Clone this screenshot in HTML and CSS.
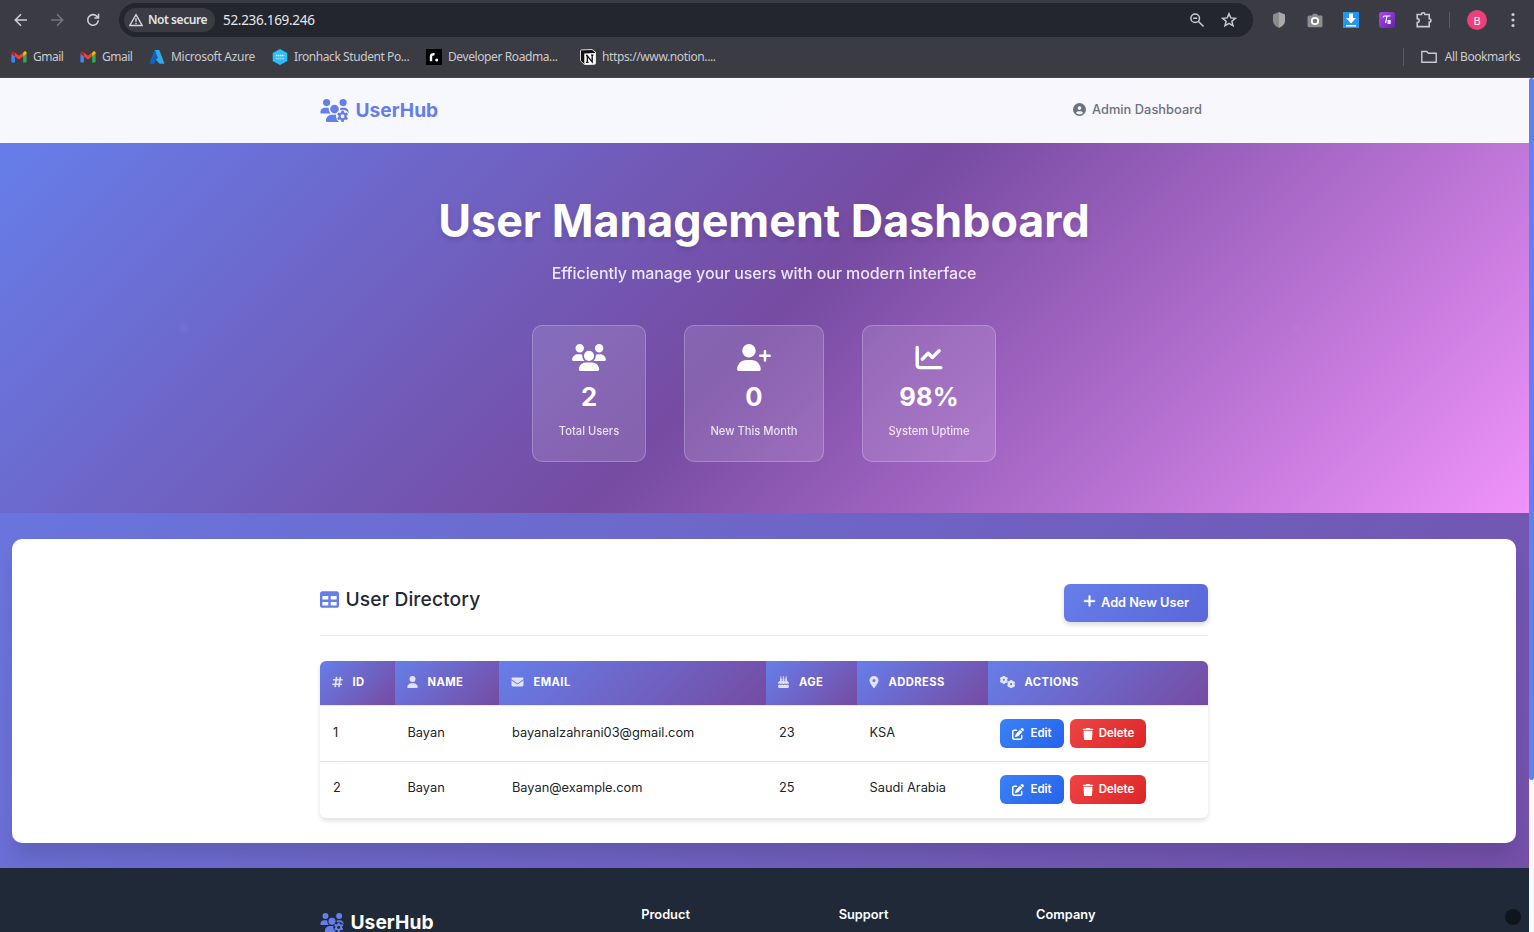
FILE: index.html
```html
<!DOCTYPE html>
<html lang="en">
<head>
<meta charset="utf-8">
<title>UserHub</title>
<link rel="stylesheet" href="styles.css">
</head>
<body>
<svg class="defs" width="0" height="0">
  <defs>
    <symbol id="i-users" viewBox="0 0 640 512"><path d="M144 0a80 80 0 1 1 0 160A80 80 0 1 1 144 0zM512 0a80 80 0 1 1 0 160A80 80 0 1 1 512 0zM0 298.7C0 239.8 47.8 192 106.7 192h42.7c15.9 0 31 3.5 44.6 9.7c-1.3 7.2-1.9 14.7-1.9 22.3c0 38.2 16.8 72.5 43.3 96H21.3C9.6 320 0 310.4 0 298.7zM405.3 320c26.6-23.5 43.3-57.8 43.3-96c0-7.6-.7-15-1.9-22.3c13.6-6.3 28.7-9.7 44.6-9.7h42.7C592.2 192 640 239.8 640 298.7c0 11.8-9.6 21.3-21.3 21.3H405.3zM224 224a96 96 0 1 1 192 0 96 96 0 1 1 -192 0zM128 485.3C128 411.7 187.7 352 261.3 352H378.7C452.3 352 512 411.7 512 485.3c0 14.7-11.9 26.7-26.7 26.7H154.7c-14.7 0-26.7-11.9-26.7-26.7z"/></symbol>
    <mask id="gear-cut" maskUnits="userSpaceOnUse" x="0" y="0" width="640" height="512"><rect width="640" height="512" fill="#fff"/><circle cx="500" cy="384" r="146" fill="#000"/></mask>
    <symbol id="i-gear" viewBox="-100 -100 200 200"><g><rect x="-28" y="-100" width="56" height="48" rx="10"/><rect x="-28" y="52" width="56" height="48" rx="10"/><rect x="-28" y="-100" width="56" height="48" rx="10" transform="rotate(60)"/><rect x="-28" y="52" width="56" height="48" rx="10" transform="rotate(60)"/><rect x="-28" y="-100" width="56" height="48" rx="10" transform="rotate(120)"/><rect x="-28" y="52" width="56" height="48" rx="10" transform="rotate(120)"/></g><circle r="54" fill="none" stroke="currentColor" stroke-width="58"/></symbol>
    <symbol id="i-users-gear" viewBox="0 0 640 512"><g mask="url(#gear-cut)"><use href="#i-users" width="640" height="512"/></g><path fill-rule="evenodd" transform="translate(4 8)" d="M472 246h48l9 42 24 14 39-12 25 43-30 29v28l30 29-25 43-39-12-24 14-9 42h-48l-9-42-24-14-39 12-25-43 30-29v-28l-30-29 25-43 39 12 24-14zM496 334a42 42 0 1 0 0 84 42 42 0 1 0 0-84z"/></symbol>
    <symbol id="i-user" viewBox="0 0 448 512"><path d="M224 256A128 128 0 1 0 224 0a128 128 0 1 0 0 256zm-45.7 48C79.8 304 0 383.8 0 482.3C0 498.7 13.3 512 29.7 512H418.3c16.4 0 29.7-13.3 29.7-29.7C448 383.8 368.2 304 269.7 304H178.3z"/></symbol>
    <symbol id="i-user-plus" viewBox="0 0 640 512"><path d="M96 128a128 128 0 1 1 256 0A128 128 0 1 1 96 128zM0 482.3C0 383.8 79.8 304 178.3 304h91.4C368.2 304 448 383.8 448 482.3c0 16.4-13.3 29.7-29.7 29.7H29.7C13.3 512 0 498.7 0 482.3zM504 312V248H440c-13.3 0-24-10.7-24-24s10.7-24 24-24h64V136c0-13.3 10.7-24 24-24s24 10.7 24 24v64h64c13.3 0 24 10.7 24 24s-10.7 24-24 24H552v64c0 13.3-10.7 24-24 24s-24-10.7-24-24z"/></symbol>
    <symbol id="i-chart" viewBox="0 0 512 512"><path d="M64 64c0-17.7-14.3-32-32-32S0 46.3 0 64V400c0 44.2 35.8 80 80 80H480c17.7 0 32-14.3 32-32s-14.3-32-32-32H80c-8.800 0-16-7.200-16-16V64zm406.6 86.6c12.5-12.5 12.5-32.8 0-45.3s-32.8-12.5-45.3 0L320 210.7l-57.4-57.4c-12.5-12.5-32.8-12.5-45.3 0l-112 112c-12.5 12.5-12.5 32.8 0 45.3s32.8 12.5 45.3 0L240 221.3l57.4 57.4c12.5 12.5 32.8 12.5 45.3 0l128-128z"/></symbol>
    <symbol id="i-circle-user" viewBox="0 0 512 512"><path fill-rule="evenodd" d="M399 384.2C376.9 345.8 335.4 320 288 320H224c-47.4 0-88.9 25.8-111 64.2c35.2 39.2 86.2 63.8 143 63.8s107.8-24.7 143-63.8zM0 256a256 256 0 1 1 512 0A256 256 0 1 1 0 256zm256 16a72 72 0 1 0 0-144 72 72 0 1 0 0 144z"/></symbol>
    <symbol id="i-table" viewBox="0 0 512 512"><path fill-rule="evenodd" d="M64 256V160H224v96H64zm0 64H224v96H64V320zm224 96V320H448v96H288zM448 256H288V160H448v96zM64 32C28.7 32 0 60.7 0 96V416c0 35.3 28.7 64 64 64H448c35.3 0 64-28.7 64-64V96c0-35.3-28.7-64-64-64H64z"/></symbol>
    <symbol id="i-plus" viewBox="0 0 448 512"><path stroke="currentColor" stroke-width="12" d="M256 80c0-17.7-14.3-32-32-32s-32 14.3-32 32V224H48c-17.7 0-32 14.3-32 32s14.3 32 32 32H192V432c0 17.7 14.3 32 32 32s32-14.3 32-32V288H400c17.7 0 32-14.3 32-32s-14.3-32-32-32H256V80z"/></symbol>
    <symbol id="i-hash" viewBox="0 0 448 512"><path fill="none" stroke="currentColor" stroke-width="74" stroke-linecap="round" d="M181 64 128 448M341 64 288 448M64 160H416M32 352H384"/></symbol>
    <symbol id="i-mail" viewBox="0 0 512 512"><path d="M48 64C21.5 64 0 85.5 0 112c0 15.1 7.1 29.3 19.2 38.4L236.8 313.6c11.4 8.5 27 8.5 38.4 0L492.8 150.4c12.1-9.1 19.2-23.3 19.2-38.4c0-26.5-21.5-48-48-48H48zM0 176V384c0 35.3 28.7 64 64 64H448c35.3 0 64-28.7 64-64V176L294.4 339.2c-22.8 17.1-54 17.1-76.8 0L0 176z"/></symbol>
    <symbol id="i-cake" viewBox="0 0 448 512"><path d="M112 0c-18 24-28 36-28 52a28 28 0 0 0 56 0c0-16-10-28-28-52zM224 0c-18 24-28 36-28 52a28 28 0 0 0 56 0c0-16-10-28-28-52zM336 0c-18 24-28 36-28 52a28 28 0 0 0 56 0c0-16-10-28-28-52zM76 100h72v124h40V100h72v124h40V100h72v124h12c35 0 64 29 64 64v50c-26 0-36-18-56-18-30 0-30 30-56 30s-30-30-56-30-30 30-56 30-30-30-56-30-30 30-56 30-26-30-56-30c-20 0-30 18-56 18v-50c0-35 29-64 64-64h12zM0 380c34 0 40-20 56-20 20 0 26 30 56 30s30-30 56-30 26 30 56 30 30-30 56-30 26 30 56 30 36-30 56-30c16 0 22 20 56 20v96c0 20-16 36-32 36H32c-18 0-32-16-32-36z"/></symbol>
    <symbol id="i-pin" viewBox="0 0 384 512"><path fill-rule="evenodd" d="M215.7 499.2C267 435 384 279.4 384 192C384 86 298 0 192 0S0 86 0 192c0 87.4 117 243 168.3 307.2c12.3 15.3 35.1 15.3 47.4 0zM192 128a64 64 0 1 1 0 128 64 64 0 1 1 0-128z"/></symbol>
    <symbol id="i-gears" viewBox="0 0 640 512"><use href="#i-gear" x="-10" y="-10" width="350" height="350"/><use href="#i-gear" x="300" y="172" width="350" height="350"/></symbol>
    <symbol id="i-edit" viewBox="0 0 512 512"><path d="M471.6 21.7c-21.9-21.9-57.3-21.9-79.2 0L362.3 51.7l97.9 97.9 30.1-30.1c21.9-21.9 21.9-57.3 0-79.2L471.6 21.7zm-299.2 220c-6.1 6.1-10.8 13.6-13.5 21.9l-29.6 88.8c-2.9 8.6-.6 18.1 5.8 24.6s15.9 8.7 24.6 5.8l88.8-29.6c8.2-2.7 15.7-7.4 21.9-13.5L437.7 172.3 339.7 74.3 172.4 241.7zM96 64C43 64 0 107 0 160V416c0 53 43 96 96 96H352c53 0 96-43 96-96V320c0-17.7-14.3-32-32-32s-32 14.3-32 32v96c0 17.7-14.3 32-32 32H96c-17.7 0-32-14.3-32-32V160c0-17.7 14.3-32 32-32h96c17.7 0 32-14.3 32-32s-14.3-32-32-32H96z"/></symbol>
    <symbol id="i-trash" viewBox="0 0 448 512"><path d="M135.2 17.7L128 32H32C14.3 32 0 46.3 0 64S14.3 96 32 96H416c17.7 0 32-14.3 32-32s-14.3-32-32-32H320l-7.2-14.3C307.4 6.8 296.3 0 284.2 0H163.8c-12.1 0-23.2 6.8-28.6 17.7zM416 128H32L53.2 467c1.6 25.3 22.6 45 47.9 45H346.9c25.3 0 46.3-19.7 47.9-45L416 128z"/></symbol>
    <symbol id="i-gmail" viewBox="0 0 16 16"><path fill="#4285f4" d="M1 13.4h2.9V7.2L.4 4.8V12.600q0 .8.6.8z"/><path fill="#34a853" d="M12.100 13.400H15q.6 0 .6-.8V4.800l-3.500 2.400z"/><path fill="#fbbc04" d="M12.100 3.700v3.700l3.500-2.600V3.900c0-1.500-1.500-2-2.500-1.200z"/><path fill="#ea4335" d="M3.900 7.400V3.600L8 6.700l4.100-3.100v3.800L8 10.500z"/><path fill="#c5221f" d="M.4 3.900v.9l3.500 2.600V3.600l-1-.8C1.900 2.100.4 2.500.4 3.900z"/></symbol>
  </defs>
</svg>

<header class="chrome">
  <div class="toolbar">
    <svg class="nav-ico back" viewBox="0 0 16 16"><path d="M14 8H2.500M8 2.300 2.300 8 8 13.700"/></svg>
    <svg class="nav-ico fwd" viewBox="0 0 16 16"><path d="M2 8h11.500M8 2.300 13.700 8 8 13.700"/></svg>
    <svg class="nav-ico reload" viewBox="0 0 16 16"><path d="M13.300 8.300A5.300 5.300 0 1 1 11.800 4.200L13.500 6M13.500 1.800V6H9.300"/></svg>
    <div class="omnibox">
      <div class="chip">
        <svg class="warn" viewBox="0 0 14 14"><path d="M7 1.700 13.200 12.500H.8z"/><path d="M7 5.200v3.600M7 9.700v1.500"/></svg>
        <span>Not secure</span>
      </div>
      <span class="url">52.236.169.246</span>
      <svg class="omni-ico" viewBox="0 0 16 16"><circle cx="6.200" cy="6.200" r="4.300"/><path d="m9.500 9.500 5 5M4.200 6.200h4"/></svg>
      <svg class="omni-ico star" viewBox="0 0 16 16"><path d="m8 1.700 1.800 4.200 4.600.4-3.500 3 1.100 4.500L8 11.400l-4 2.400 1.100-4.500-3.500-3 4.600-.4z"/></svg>
    </div>
    <div class="extensions">
      <svg class="ext" viewBox="0 0 16 16"><path fill="#aaa9a7" d="M8 0 14 2.500V9q0 4-6 7z"/><path fill="#8b8b8a" d="M8 0 2 2.500V9q0 4 6 7z"/></svg>
      <svg class="ext" viewBox="0 0 16 16"><path fill="#8e8e8d" d="M.5 5q0-1.500 1.500-1.500h3L6 1.700h4l1 1.800h3q1.500 0 1.500 1.500v9q0 1.300-1.500 1.300H2Q.5 15.300.5 14z"/><circle cx="8" cy="9" r="3.200" fill="#777" stroke="#fff" stroke-width="1.800"/></svg>
      <svg class="ext" viewBox="0 0 16 16"><path fill="#2196f3" d="M0 0h16v16H0z"/><path fill="#fff" d="M6 1.500h4V6h3l-5 5.500L3 6h3zM3 13h10v1.500H3z"/></svg>
      <svg class="ext" viewBox="0 0 16 16"><defs><linearGradient id="pg" x2="1" y2="1"><stop stop-color="#a94bea"/><stop offset="1" stop-color="#6720b0"/></linearGradient></defs><rect width="16" height="16" rx="2.500" fill="url(#pg)"/><path fill="none" stroke="#fff" stroke-width="1.200" d="M4 5.500q.3-1.500 1.800-1.500H11.500M8 4 6.600 11"/><path fill="#fff" opacity=".85" d="M8.500 8h3.300v4H8.500z"/></svg>
      <svg class="ext puzzle" viewBox="0 0 16 16"><path d="M1.200 2.500h4.300a1.700 1.700 0 0 1 3.400 0h4.300v4.200a1.700 1.700 0 0 1 0 3.400v4.500H1.200v-4a2 2 0 0 0 0-4z"/></svg>
      <span class="bar"></span>
      <span class="avatar">B</span>
      <svg class="dots" viewBox="0 0 4 16"><circle cx="2" cy="2.500" r="1.600"/><circle cx="2" cy="8" r="1.600"/><circle cx="2" cy="13.500" r="1.600"/></svg>
    </div>
  </div>
  <nav class="bookmarks">
    <a class="bm bm-gmail"><svg viewBox="0 0 16 16"><use href="#i-gmail"/></svg><span>Gmail</span></a>
    <a class="bm bm-gmail2"><svg viewBox="0 0 16 16"><use href="#i-gmail"/></svg><span>Gmail</span></a>
    <a class="bm bm-azure"><svg viewBox="0 0 16 16"><path fill="#0f65b8" d="M5.500 1h4.600L5.500 14.800H1.200q-.8 0-.6-1z"/><path fill="#0a4fa0" d="M5 9.500h6.500l1 4-7.700-2.700z"/><path fill="#2fa8ec" d="M6 1h4.300l5 13q.2.800-.7.800h-4L6.500 10.500 8.800 9z"/></svg><span>Microsoft Azure</span></a>
    <a class="bm bm-iron"><svg viewBox="0 0 16 16"><path fill="#2dbdf7" d="m8 0 7.300 4v8L8 16 .7 12V4z"/><path stroke="#d9f4ff" stroke-width="1.500" stroke-dasharray="1.500 .5" d="M3.800 6.500h8.400"/><path stroke="#9ce2fd" stroke-width="1.300" stroke-dasharray="1.200 .6" d="M4 9.500h8"/></svg><span>Ironhack Student Po...</span></a>
    <a class="bm bm-road"><svg viewBox="0 0 16 16"><path fill="#000" d="M0 0h16v16H0z"/><path fill="none" stroke="#fff" stroke-width="2.400" d="M5 12.300V7q0-2 3.500-1.700"/><circle cx="10.700" cy="11" r="1.500" fill="#fff"/></svg><span>Developer Roadma...</span></a>
    <a class="bm bm-notion"><svg viewBox="0 0 16 16"><path fill="#111" stroke="#eee" stroke-width=".9" stroke-linejoin="round" d="M1.500.9 12 .5l3.500 2.600v11.400q0 .8-1 .9L4.500 15.600.5 11.700V2q0-1 1-1.100z"/><path fill="#fff" d="M4.300 4.500 15.300 4v11L4.300 15.500z"/><path fill="none" stroke="#111" stroke-width="1.300" d="M7.300 13.300V6.800l4.900 6.100V6M6 6.700h1.800M11 6.200h2.500M6 13.300h2.500"/></svg><span>https://www.notion....</span></a>
    <div class="all"><svg viewBox="0 0 16 14"><path d="M.8 1.500h5l1.600 1.800h7.800v9H.8z"/></svg><span>All Bookmarks</span></div>
  </nav>
</header>

<div class="viewport">
  <div class="page">
    <nav class="topnav">
      <div class="container topnav-row">
        <div class="brand"><svg><use href="#i-users-gear"/></svg><span>UserHub</span></div>
        <div class="admin"><svg><use href="#i-circle-user"/></svg><span>Admin Dashboard</span></div>
      </div>
    </nav>

    <section class="hero">
      <h1>User Management Dashboard</h1>
      <p class="lead">Efficiently manage your users with our modern interface</p>
      <div class="stats">
        <div class="stat stat-total"><svg class="wide"><use href="#i-users"/></svg><strong>2</strong><span>Total Users</span></div>
        <div class="stat stat-new"><svg class="wide"><use href="#i-user-plus"/></svg><strong>0</strong><span>New This Month</span></div>
        <div class="stat stat-up"><svg><use href="#i-chart"/></svg><strong>98%</strong><span>System Uptime</span></div>
      </div>
    </section>

    <main class="main">
      <div class="panel">
        <div class="container">
          <div class="panel-head">
            <h2><svg><use href="#i-table"/></svg><span>User Directory</span></h2>
            <button class="btn-add"><svg><use href="#i-plus"/></svg><span>Add New User</span></button>
          </div>
          <table class="users">
            <colgroup><col class="c-id"><col class="c-name"><col class="c-email"><col class="c-age"><col class="c-address"><col class="c-actions"></colgroup>
            <thead>
              <tr>
                <th><div><svg class="w10"><use href="#i-hash"/></svg>ID</div></th>
                <th><div><svg class="w10"><use href="#i-user"/></svg>NAME</div></th>
                <th><div><svg class="w12"><use href="#i-mail"/></svg>EMAIL</div></th>
                <th><div><svg class="w10"><use href="#i-cake"/></svg>AGE</div></th>
                <th><div><svg class="w9"><use href="#i-pin"/></svg>ADDRESS</div></th>
                <th><div><svg class="w14"><use href="#i-gears"/></svg>ACTIONS</div></th>
              </tr>
            </thead>
            <tbody>
              <tr>
                <td>1</td><td>Bayan</td><td>bayanalzahrani03@gmail.com</td><td>23</td><td>KSA</td>
                <td><div class="actions"><button class="btn edit"><svg><use href="#i-edit"/></svg>Edit</button><button class="btn del"><svg><use href="#i-trash"/></svg>Delete</button></div></td>
              </tr>
              <tr>
                <td>2</td><td>Bayan</td><td>Bayan@example.com</td><td>25</td><td>Saudi Arabia</td>
                <td><div class="actions"><button class="btn edit"><svg><use href="#i-edit"/></svg>Edit</button><button class="btn del"><svg><use href="#i-trash"/></svg>Delete</button></div></td>
              </tr>
            </tbody>
          </table>
        </div>
      </div>
    </main>

    <footer class="footer">
      <div class="container footer-grid">
        <div class="footer-brand"><svg><use href="#i-users-gear"/></svg><span>UserHub</span></div>
        <h4>Product</h4>
        <h4>Support</h4>
        <h4>Company</h4>
      </div>
      <span class="bubble"></span>
    </footer>
  </div>
  <div class="scrollbar"><div class="thumb"></div></div>
</div>
</body>
</html>
```
FILE: styles.css
```css
* { box-sizing: border-box; }
html, body { margin: 0; height: 932px; overflow: hidden; }
body { font-family: Inter, "Liberation Sans", sans-serif; display: flex; flex-direction: column; }
svg { fill: currentColor; flex: none; display: block; }
.defs { position: absolute; }
h1, h2, h4, p { margin: 0; }
button { border: 0; font-family: inherit; }

/* Browser chrome */
.chrome { height: 78px; flex: none; background: #3a3b43; border-bottom: 1px solid #45464c; color: #c9cacd; font-family: "Noto Sans", "Open Sans", sans-serif; }
.toolbar { height: 40px; display: flex; align-items: center; padding: 0 0 0 13px; }
.nav-ico { width: 16px; height: 16px; fill: none; stroke: #cfd0d4; stroke-width: 1.6; }
.fwd { stroke: #75767c; margin-left: 20px; }
.reload { margin-left: 20px; }
.omnibox { margin-left: 18px; width: 1134px; height: 34px; border-radius: 17px; background: #24262e; display: flex; align-items: center; padding: 0 16px 0 5px; }
.chip { width: 91px; height: 24px; border-radius: 12px; background: #3a3b43; display: flex; align-items: center; gap: 5px; padding: 0 0 1px 5px; font-size: 12px; font-weight: 600; color: #e3e3e6; white-space: nowrap; letter-spacing: -.45px; }
.warn { width: 14px; height: 14px; fill: none; stroke: #d5d6d9; stroke-width: 1.4; }
.url { margin-left: 8px; margin-right: auto; font-size: 13.500px; letter-spacing: -.3px; color: #e6e7ea; }
.omni-ico { width: 16px; height: 16px; fill: none; stroke: #c9cacd; stroke-width: 1.5; }
.star { margin-left: 16px; }
.extensions { display: flex; align-items: center; margin-left: 18px; }
.ext { width: 16px; height: 16px; margin-right: 20px; }
.puzzle { fill: none; stroke: #c9cacd; stroke-width: 1.600; margin: 0 17px 0 1px; overflow: visible; }
.bar { width: 1px; height: 16px; background: #5b5c63; }
.avatar { width: 20px; height: 20px; border-radius: 50%; background: #ec407a; color: #fff; font-size: 11px; display: grid; place-items: center; margin: 0 24px 0 17px; }
.dots { width: 4px; height: 16px; }
.bookmarks { height: 34px; display: flex; align-items: center; padding-left: 11px; font-size: 12px; white-space: nowrap; }
.bm { display: flex; align-items: center; gap: 6px; }
.bm svg { width: 16px; height: 16px; }
.bm span, .all span { padding-bottom: 1px; }
.bm-gmail, .bm-gmail2 { width: 69px; letter-spacing: -.5px; }
.bm-azure { width: 123px; letter-spacing: -.3px; }
.bm-iron { width: 154px; letter-spacing: -.42px; }
.bm-road { width: 154px; letter-spacing: -.4px; }
.bm-notion { letter-spacing: -.38px; }
.all { margin-left: auto; display: flex; align-items: center; gap: 8px; margin-right: 14px; padding-left: 17px; border-left: 1px solid #5b5c63; letter-spacing: -.43px; }
.all svg { width: 16px; height: 14px; fill: none; stroke: #c9cacd; stroke-width: 1.400; }

/* Page */
.viewport { flex: 1; display: flex; min-height: 0; overflow: hidden; }
.page { width: 1529px; height: 1039px; flex: none; display: flex; flex-direction: column; background: linear-gradient(135deg, #667eea 0%, #764ba2 100%); }
.scrollbar { width: 5px; background: #f8fafc; }
.thumb { height: 702px; border-radius: 3px; background: #667eea; }
.container { width: 888px; margin-left: 320px; }
.topnav { height: 65px; flex: none; background: rgba(255, 255, 255, .95); }
.topnav-row { height: 64px; display: flex; align-items: center; justify-content: space-between; }
.brand { display: flex; align-items: center; gap: 6.500px; color: #667eea; font-size: 19.200px; font-weight: 700; letter-spacing: 0; }
.brand svg { width: 29px; height: 23px; }
.admin { display: flex; align-items: center; gap: 6px; padding: 0 6px 2px 0; color: #6b7280; font-size: 12.800px; font-weight: 500; letter-spacing: .05px; }
.admin svg { width: 13px; height: 13px; }

.hero { height: 370px; flex: none; display: flex; flex-direction: column; align-items: center; color: #fff; background: radial-gradient(circle at 184px 185px, rgba(255, 255, 255, .03) 4px, transparent 4.500px), radial-gradient(circle at 1296px 185px, rgba(255, 255, 255, .02) 4px, transparent 4.500px), linear-gradient(135deg, #667eea 0%, #764ba2 50%, #f093fb 100%); }
.hero h1 { margin-top: 51px; font-size: 44.800px; line-height: 54px; font-weight: 700; text-shadow: 0 3px 5px rgba(0, 0, 0, .12); white-space: nowrap; padding-right: 1px; }
.lead { margin-top: 13px; font-size: 16px; line-height: 24px; font-weight: 500; letter-spacing: -.09px; opacity: .85; padding-right: 1px; }
.stats { display: flex; gap: 38px; margin-top: 40px; padding-right: 1px; }
.stat { height: 137px; padding-top: 18px; display: flex; flex-direction: column; align-items: center; border: 1px solid rgba(255, 255, 255, .22); border-radius: 10px; background: rgba(255, 255, 255, .13); }
.stat svg { width: 28px; height: 27px; }
.stat svg.wide { width: 34px; height: 27px; }
.stat strong { margin-top: 9px; font-size: 25.600px; line-height: 34px; font-weight: 700; }
.stat span { margin-top: 8px; font-size: 11.200px; line-height: 18px; font-weight: 500; opacity: .8; }
.stat-total { width: 114px; }
.stat-new { width: 140px; }
.stat-up { width: 134px; }

.main { height: 355px; flex: none; padding: 26px 13px 25px 12px; }
.panel { height: 304px; border-radius: 10px; background: #fff; box-shadow: 0 16px 20px -4px rgba(0, 0, 0, .12); padding-top: 45px; }
.panel .container { margin-left: 308px; }
.panel-head { height: 52px; display: flex; align-items: flex-start; justify-content: space-between; border-bottom: 1px solid #e5e7eb; }
.panel-head h2 { display: flex; align-items: center; gap: 6.500px; height: 31px; font-size: 19.200px; font-weight: 500; letter-spacing: .12px; color: #1f2937; }
.panel-head h2 svg { width: 19px; height: 19px; color: #667eea; }
.panel-head h2 span { padding-bottom: 2px; }
.btn-add { width: 144px; height: 38px; display: flex; align-items: center; justify-content: center; gap: 5px; border-radius: 6px; color: #fff; font-size: 12.800px; font-weight: 600; letter-spacing: -.05px; background: linear-gradient(135deg, #667eea, #5a67d8); box-shadow: 0 3px 5px rgba(0, 0, 0, .14); padding: 0 0 2px; }
.btn-add svg { width: 13px; height: 14px; margin-top: -2px; }

.users { width: 888px; margin-top: 25px; table-layout: fixed; border-collapse: separate; border-spacing: 0; border-radius: 6px; overflow: hidden; box-shadow: 0 3px 5px rgba(0, 0, 0, .12); }
.c-id { width: 75px; } .c-name { width: 104px; } .c-email { width: 267px; } .c-age { width: 91px; } .c-address { width: 131px; } .c-actions { width: 220px; }
.users th { height: 45px; padding: 0 0 2px 12px; text-align: left; color: #fff; font-size: 11.200px; font-weight: 700; letter-spacing: .42px; background: linear-gradient(135deg, #667eea, #764ba2); background-clip: padding-box; border-bottom: 1px solid #e5e7eb; }
.users th div { display: flex; align-items: center; gap: 9.500px; }
.users th:nth-child(4) div { gap: 10px; }
.users th svg { height: 12px; opacity: .8; }
.w9 { width: 10px; } .w10 { width: 11px; } .w12 { width: 13px; } .w14 { width: 15px; }
.users td { height: 56px; padding: 0 0 3px 12.500px; font-size: 12.800px; color: #212529; }
.users td:first-child, .users td:nth-child(3), .users td:nth-child(4) { padding-left: 13px; }
.users tbody tr:first-child td { border-bottom: 1px solid #e5e7eb; }
.users tbody tr:last-child td { height: 55.500px; padding-bottom: 4px; }
.users tbody tr td:last-child { padding: 0 0 0 12px; }
.users tbody tr:last-child td:last-child { padding-bottom: 1px; }
.actions { display: flex; gap: 6px; }
.btn { height: 29px; display: flex; align-items: center; justify-content: center; gap: 6px; padding: 0 0 1px; border-radius: 6px; color: #fff; font-size: 11.500px; font-weight: 600; letter-spacing: -.05px; }
.btn svg { width: 12px; height: 12px; margin-top: 2px; }
.edit { width: 64px; background: linear-gradient(135deg, #3b82f6, #2563eb); }
.del { width: 76px; gap: 5px; background: linear-gradient(135deg, #ef4444, #dc2626); }

.footer { position: relative; flex: 1; background: #1f2937; padding-top: 38px; color: #fff; }
.footer-grid { display: grid; grid-template-columns: 295.700px 171.800px 171.800px 171.800px; column-gap: 25.600px; }
.footer-brand { display: flex; align-items: center; gap: 6.500px; height: 32px; font-size: 19.200px; line-height: 20px; font-weight: 700; letter-spacing: .05px; }
.footer-brand svg { width: 24px; height: 19px; color: #667eea; }
.footer h4 { font-size: 12.800px; line-height: 17px; font-weight: 600; }
.bubble { position: absolute; left: 1505px; top: 41px; width: 16px; height: 16px; border-radius: 50%; background: #10151c; }
```
